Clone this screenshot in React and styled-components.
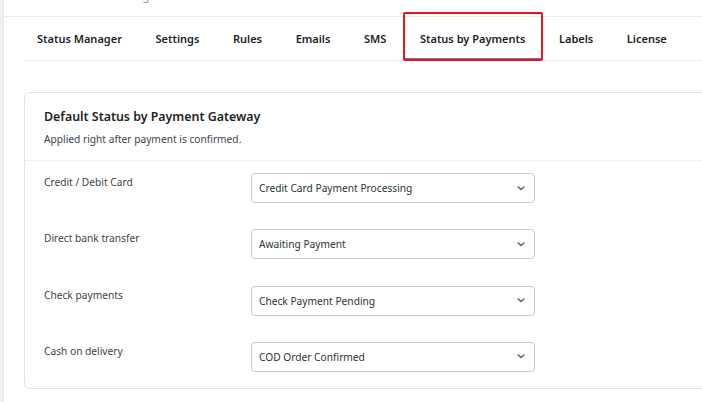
import React from 'react'
import styled, { createGlobalStyle } from 'styled-components'

const GlobalStyle = createGlobalStyle`
  html, body {
    margin: 0;
    background: #fff;
    overflow: hidden;
  }
  body {
    font-family: 'Noto Sans', 'Open Sans', sans-serif;
    color: #1d2327;
  }
`

const Page = styled.div`
  min-height: 402px;
  border-left: 3px solid #f0f0f1;
  box-shadow: inset 1px 0 0 #e2e4e7;
  overflow: hidden;
`

const TopBar = styled.div`
  height: 16px;
  border-bottom: 1px solid #ececec;
  overflow: hidden;
`

const Breadcrumb = styled.span`
  display: block;
  margin: -11px 0 0 42px;
  font-size: 11px;
  line-height: 14px;
  color: #8c8f94;
`

const Nav = styled.nav`
  display: flex;
  height: 43px;
  margin-left: 21px;
  border-bottom: 1px solid #ececec;
`

const Tab = styled.a`
  display: flex;
  align-items: center;
  padding: 0 16.8px 0 ${(props) => (props.$first ? '13px' : '16.8px')};
  font-size: 11px;
  font-weight: 600;
  color: #1d2327;
  text-decoration: none;
  white-space: nowrap;
  position: relative;
  box-shadow: ${(props) => (props.$active ? 'inset 0 -2px 0 #5b7db1' : 'none')};

  ${(props) =>
    props.$active &&
    `
    &::after {
      content: '';
      position: absolute;
      left: 0;
      right: -1px;
      top: -5px;
      bottom: -1px;
      border: 2px solid #e8141c;
      border-radius: 2px;
    }
  `}
`

const Card = styled.section`
  margin: 31px -20px 0 21px;
  border: 1px solid #e3e3e3;
  border-radius: 6px;
`

const CardHeader = styled.header`
  padding: 14px 19px 13px;
  border-bottom: 1px solid #efefef;
`

const Title = styled.h2`
  margin: 0;
  font-size: 12.4px;
  line-height: 20px;
  font-weight: 600;
  color: #1d2327;
`

const Subtitle = styled.p`
  margin: 4px 0 0;
  font-size: 10.2px;
  line-height: 16px;
  color: #3c434a;
`

const Rows = styled.div`
  padding: 0 0 3px;
`

const Row = styled.div`
  display: flex;
  align-items: flex-start;
  padding: 13px 19px 13.3px;
  height: 30px;

  &:first-child {
    padding-top: 12px;
  }
`

const Label = styled.label`
  width: 207px;
  padding-top: 1px;
  font-size: 10.2px;
  line-height: 16px;
  color: #3c434a;
`

const SelectBox = styled.div`
  box-sizing: border-box;
  display: flex;
  align-items: center;
  justify-content: space-between;
  width: 284px;
  height: 30px;
  padding: 0 9px 0 7px;
  border: 1px solid #c8cacd;
  border-radius: 4px;
  font-size: 10.2px;
  color: #2c3338;
  background: #fff;
`

const Chevron = () => (
  <svg width="8" height="5" viewBox="0 0 8 5" fill="none">
    <path d="M1 1l3 2.6L7 1" stroke="#50575e" strokeWidth="1.3" strokeLinecap="round" strokeLinejoin="round" />
  </svg>
)

const tabs = ['Status Manager', 'Settings', 'Rules', 'Emails', 'SMS', 'Status by Payments', 'Labels', 'License']

const gateways = [
  { label: 'Credit / Debit Card', value: 'Credit Card Payment Processing' },
  { label: 'Direct bank transfer', value: 'Awaiting Payment' },
  { label: 'Check payments', value: 'Check Payment Pending' },
  { label: 'Cash on delivery', value: 'COD Order Confirmed' },
]

function App() {
  const tabItems = tabs.map((tab, i) => (
    <Tab key={tab} href="#" $first={i === 0} $active={tab === 'Status by Payments'}>
      {tab}
    </Tab>
  ))

  const rows = gateways.map((gateway) => (
    <Row key={gateway.label}>
      <Label>{gateway.label}</Label>
      <SelectBox>
        <span>{gateway.value}</span>
        <Chevron />
      </SelectBox>
    </Row>
  ))

  return (
    <>
      <GlobalStyle />
      <Page>
        <TopBar>
          <Breadcrumb>Order Status Manager</Breadcrumb>
        </TopBar>
        <Nav>{tabItems}</Nav>
        <Card>
          <CardHeader>
            <Title>Default Status by Payment Gateway</Title>
            <Subtitle>Applied right after payment is confirmed.</Subtitle>
          </CardHeader>
          <Rows>{rows}</Rows>
        </Card>
      </Page>
    </>
  )
}

export default App
